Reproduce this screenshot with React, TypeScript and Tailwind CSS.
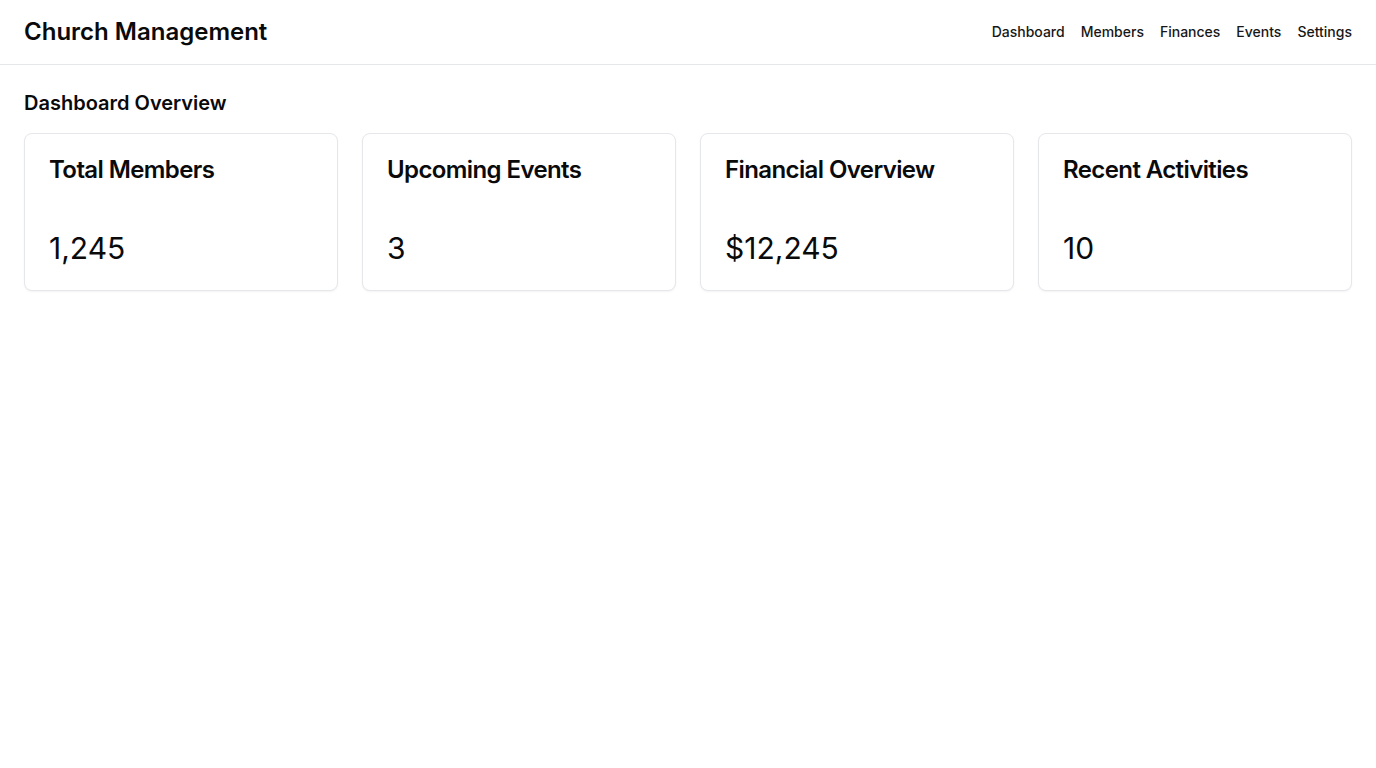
const stats = [
  { title: "Total Members", value: "1,245" },
  { title: "Upcoming Events", value: "3" },
  { title: "Financial Overview", value: "$12,245" },
  { title: "Recent Activities", value: "10" },
];

const links = ["Dashboard", "Members", "Finances", "Events", "Settings"];

export default function App() {
  return (
    <div className="min-h-screen bg-white text-[#0a0a0a] font-['Inter',sans-serif]">
      <header className="flex items-center justify-between border-b border-gray-200 px-6 py-4">
        <h1 className="text-2xl font-semibold leading-8">Church Management</h1>
        <nav className="flex gap-4">
          {links.map((link) => (
            <a key={link} href="#" className="text-sm font-medium text-[#171717]">
              {link}
            </a>
          ))}
        </nav>
      </header>
      <main className="p-6">
        <h2 className="mb-4 text-xl font-semibold leading-7">Dashboard Overview</h2>
        <section className="grid grid-cols-4 gap-6">
          {stats.map((stat) => (
            <div
              key={stat.title}
              className="flex flex-col rounded-lg border border-gray-200 bg-white p-6 shadow-xs"
            >
              <h3 className="text-2xl font-semibold leading-none tracking-tight">
                {stat.title}
              </h3>
              <p className="mt-12 text-3xl leading-9">{stat.value}</p>
            </div>
          ))}
        </section>
      </main>
    </div>
  );
}
